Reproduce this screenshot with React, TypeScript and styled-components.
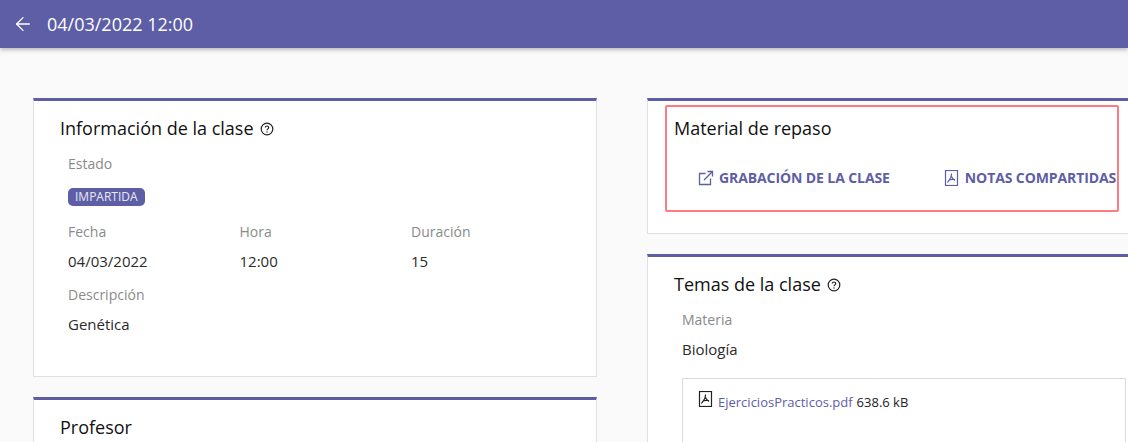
import React from 'react';
import styled, { createGlobalStyle } from 'styled-components';
import { ArrowLeft } from 'lucide-react';

const purple = '#5d5ea6';

const GlobalStyle = createGlobalStyle`
  html, body {
    margin: 0;
    height: 442px;
    overflow: hidden;
    background: #fafafa;
    font-family: 'Open Sans', sans-serif;
  }
`;

const PdfIcon = ({ color = 'currentColor' }: { color?: string }) => (
  <svg width="16" height="16" viewBox="0 0 16 16" fill="none" style={{ flexShrink: 0 }}>
    <rect x="1.500" y="0.500" width="12" height="15" stroke={color} strokeWidth="1.200" />
    <path
      d="M7.500 3.500c0 2.600-1.300 5.800-3.500 8M7.500 6.500c.6 1.800 1.800 3.300 3.500 3.800M4 11.500l-.6 1M5.800 9.800c1.500-.5 3.200-.6 5.200-.3"
      stroke={color}
      strokeWidth="1.200"
    />
  </svg>
);

const ExternalIcon = () => (
  <svg width="16" height="16" viewBox="0 0 16 16" fill="none" style={{ flexShrink: 0 }}>
    <path d="M7.500 3.500H1.500v11h11V8.500M6 10l8.500-8.500M9.500 1.500h5v5" stroke="currentColor" strokeWidth="1.300" />
  </svg>
);

const HelpIcon = () => (
  <svg width="14" height="14" viewBox="0 0 14 14" fill="none">
    <circle cx="7" cy="7" r="5.800" stroke="#222" strokeWidth="1.200" />
    <path d="M5.300 5.600c0-1 .8-1.600 1.700-1.600s1.700.6 1.700 1.500C8.700 6.900 7 6.800 7 8.300" stroke="#222" strokeWidth="1.200" />
    <circle cx="7" cy="10" r=".7" fill="#222" />
  </svg>
);

const App = () => (
  <>
    <GlobalStyle />
    <Header>
      <ArrowLeft size={22} color="#fff" strokeWidth={1.400} />
      <HeaderTitle>04/03/2022 12:00</HeaderTitle>
    </Header>
    <Columns>
      <Column>
        <Card $height={279}>
          <CardBody>
            <CardTitle>
              Información de la clase <HelpIcon />
            </CardTitle>
            <Fields>
              <Label>Estado</Label>
              <Badge>IMPARTIDA</Badge>
              <FieldGrid>
                <div>
                  <Label>Fecha</Label>
                  <Value>04/03/2022</Value>
                </div>
                <div>
                  <Label>Hora</Label>
                  <Value>12:00</Value>
                </div>
                <div>
                  <Label>Duración</Label>
                  <Value>15</Value>
                </div>
              </FieldGrid>
              <Label>Descripción</Label>
              <Value>Genética</Value>
            </Fields>
          </CardBody>
        </Card>
        <Card>
          <CardBody>
            <CardTitle>Profesor</CardTitle>
          </CardBody>
        </Card>
      </Column>
      <Column>
        <Card $height={136}>
          <Highlight>
            <CardTitle>Material de repaso</CardTitle>
            <Links>
              <LinkButton>
                <ExternalIcon />
                GRABACIÓN DE LA CLASE
              </LinkButton>
              <LinkButton>
                <PdfIcon />
                NOTAS COMPARTIDAS
              </LinkButton>
            </Links>
          </Highlight>
        </Card>
        <Card>
          <CardBody>
            <CardTitle>
              Temas de la clase <HelpIcon />
            </CardTitle>
            <Fields>
              <Label>Materia</Label>
              <Value>Biología</Value>
              <FileBox>
                <PdfIcon color="#222" />
                <FileLink>EjerciciosPracticos.pdf</FileLink>
                <FileSize>638.6 kB</FileSize>
              </FileBox>
            </Fields>
          </CardBody>
        </Card>
      </Column>
    </Columns>
  </>
);

const Header = styled.header`
  height: 48px;
  box-sizing: border-box;
  padding-left: 12px;
  display: flex;
  align-items: center;
  gap: 13px;
  background: ${purple};
  box-shadow: 0 2px 4px rgba(0, 0, 0, 0.25);
  position: relative;
`;

const HeaderTitle = styled.h1`
  margin: 0;
  font-size: 18px;
  font-weight: 400;
  color: #fff;
`;

const Columns = styled.main`
  display: grid;
  grid-template-columns: 564px 564px;
  column-gap: 50px;
  padding: 50px 0 0 33px;
  width: 1300px;
`;

const Column = styled.div`
  display: flex;
  flex-direction: column;
  gap: 20px;
`;

const Card = styled.section<{ $height?: number }>`
  box-sizing: border-box;
  height: ${(props) => (props.$height ? `${props.$height}px` : '400px')};
  background: #fff;
  border: 1px solid #e0e0e0;
  border-top: 3px solid ${purple};
`;

const CardBody = styled.div`
  padding: 15px 26px 0;
`;

const CardTitle = styled.h2`
  margin: 0;
  display: flex;
  align-items: center;
  gap: 6px;
  font-size: 18px;
  line-height: 25px;
  font-weight: 400;
  color: #111;
`;

const Fields = styled.div`
  padding: 13px 8px 0;
`;

const Label = styled.div`
  font-size: 14px;
  line-height: 20px;
  color: #8a8a8a;
`;

const Value = styled.div`
  margin-top: 9px;
  font-size: 15px;
  line-height: 20px;
  color: #2b2b2b;
`;

const Badge = styled.span`
  display: block;
  width: fit-content;
  margin: 14px 0 16px;
  padding: 0 7px;
  height: 18px;
  line-height: 18px;
  border-radius: 5px;
  background: ${purple};
  color: #e9e9f5;
  font-size: 12px;
`;

const FieldGrid = styled.div`
  display: grid;
  grid-template-columns: repeat(3, 171.5px);
  margin-bottom: 14px;
`;

const Highlight = styled.div`
  box-sizing: border-box;
  width: 454px;
  height: 107px;
  margin: 4px 0 0 17px;
  padding: 9px 0 0 7px;
  border: 2px solid #ff7b7f;
  border-radius: 2px;
`;

const Links = styled.div`
  display: flex;
  gap: 54px;
  padding: 27px 0 0 24px;
`;

const LinkButton = styled.a`
  display: flex;
  align-items: center;
  gap: 5px;
  font-size: 14px;
  line-height: 20px;
  font-weight: 700;
  letter-spacing: -0.1px;
  color: ${purple};
  white-space: nowrap;
`;

const FileBox = styled.div`
  box-sizing: border-box;
  display: flex;
  align-items: flex-start;
  width: 444px;
  margin-top: 19px;
  height: 200px;
  padding: 12px 15px;
  border: 1px solid #dcdcdc;
  font-size: 13px;
  line-height: 20px;
`;

const FileLink = styled.a`
  margin: 1px 0 0 4px;
  color: ${purple};
`;

const FileSize = styled.span`
  margin: 1px 0 0 4px;
  color: #222;
`;

export default App;
